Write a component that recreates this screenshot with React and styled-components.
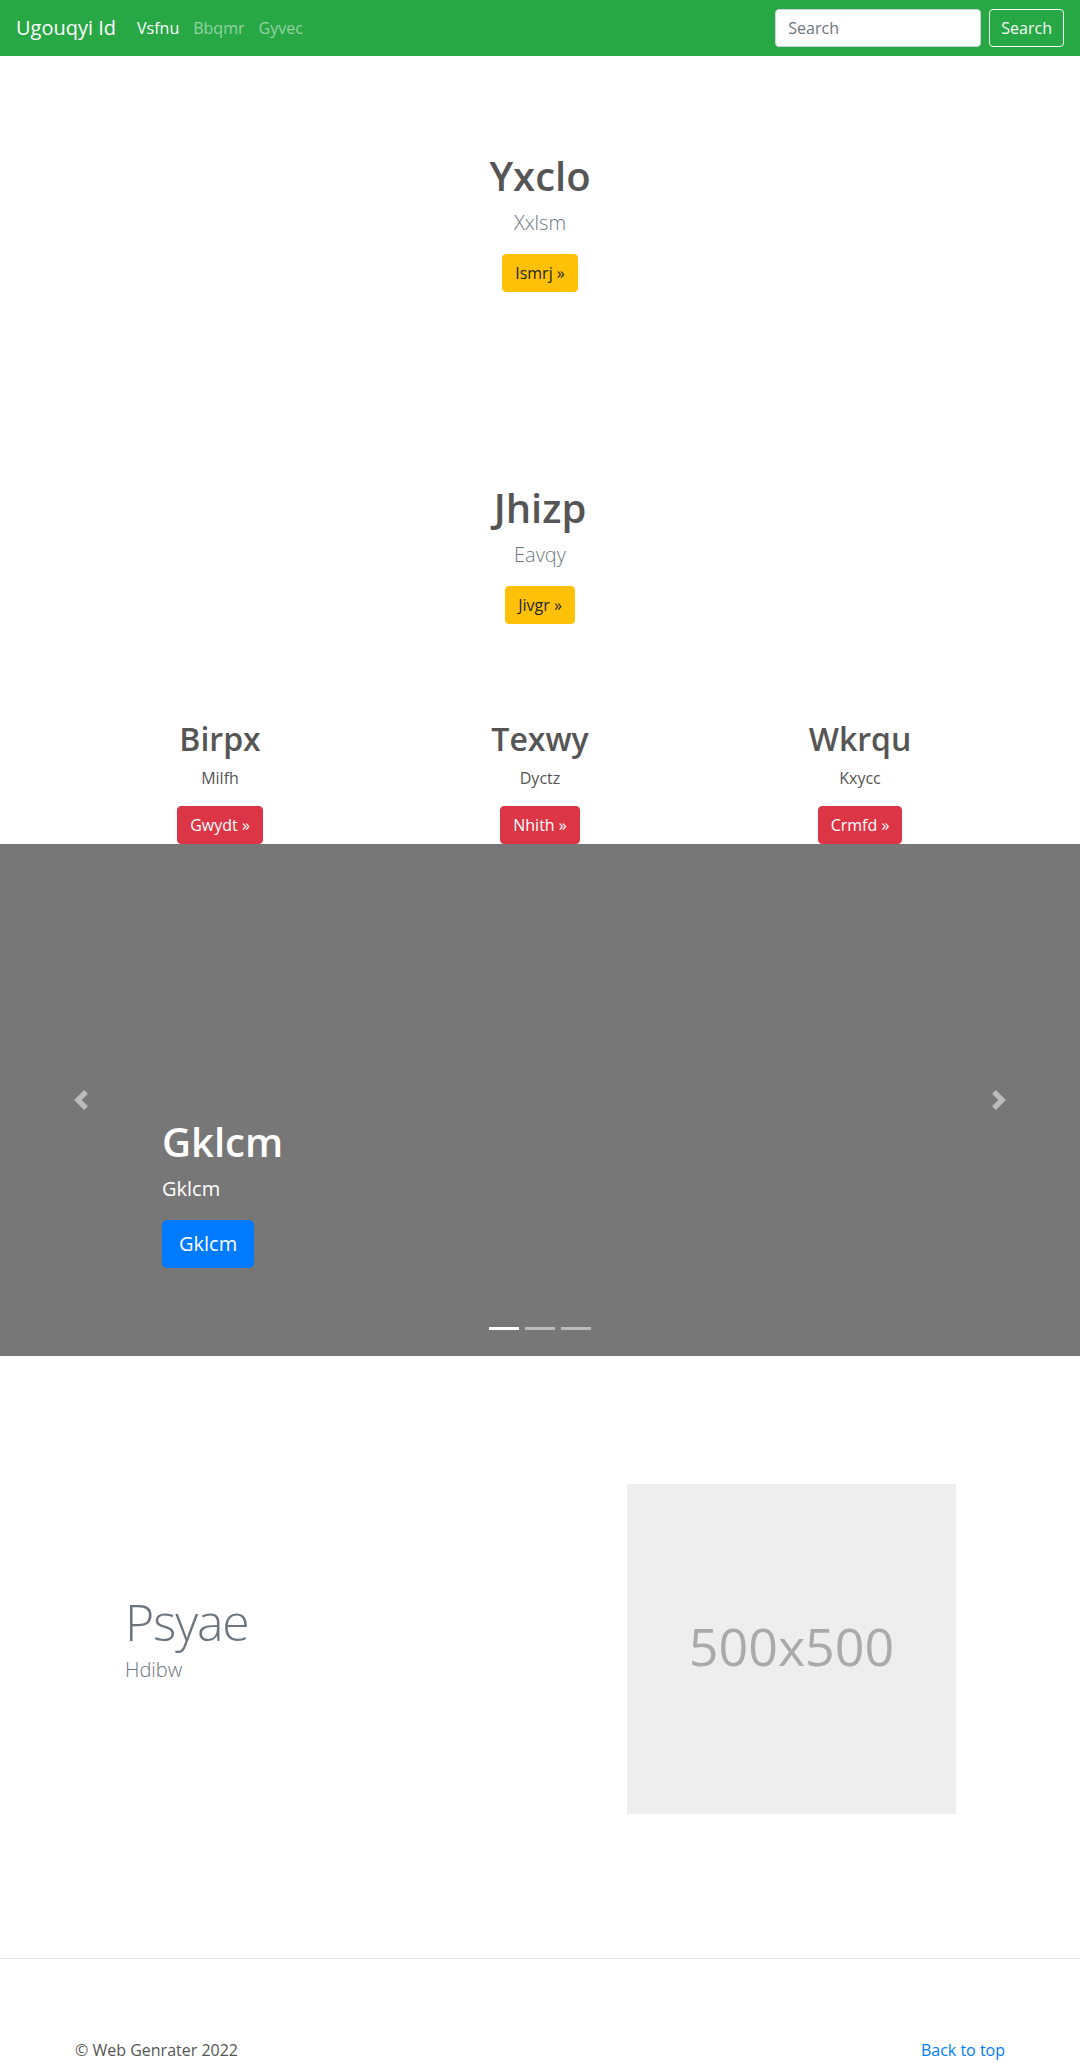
import React from "react";
import styled, { createGlobalStyle } from "styled-components";

const GlobalStyle = createGlobalStyle`
  * { box-sizing: border-box; }
  body {
    margin: 0;
    font-family: "Segoe UI", "Open Sans", "Noto Sans", sans-serif;
    font-size: 16px;
    line-height: 1.5;
    color: #555;
    background: #fff;
  }
`;

const Navbar = styled.header`
  display: flex;
  align-items: center;
  height: 56px;
  padding: 8px 16px;
  background: #28a745;
`;

const Brand = styled.a`
  font-size: 20px;
  line-height: 30px;
  padding: 5px 0;
  margin-right: 14px;
  color: #fff;
  text-decoration: none;
`;

const NavList = styled.nav`
  display: flex;
  align-items: center;
`;

const NavLink = styled.a`
  padding: 8px 7px;
  color: ${(p) => (p.$active ? "#fff" : "rgba(255,255,255,0.5)")};
  text-decoration: none;
  font-size: 16px;
`;

const SearchForm = styled.form`
  display: flex;
  align-items: center;
  margin-left: auto;
  gap: 8px;
`;

const SearchInput = styled.input`
  width: 206px;
  height: 38px;
  padding: 6px 12px;
  font: inherit;
  font-size: 16px;
  color: #495057;
  border: 1px solid #ced4da;
  border-radius: 4px;
  background: #fff;
  &::placeholder { color: #6c757d; }
`;

const OutlineButton = styled.button`
  height: 38px;
  padding: 6px 11px;
  font: inherit;
  font-size: 16px;
  color: #f8f9fa;
  background: transparent;
  border: 1px solid #f8f9fa;
  border-radius: 4px;
`;

const Hero = styled.section`
  padding: 96px 0;
  text-align: center;
`;

const HeroTitle = styled.h1`
  margin: 0 0 8px;
  font-size: 40px;
  font-weight: 600;
  line-height: 1.2;
  color: #555;
`;

const Lead = styled.p`
  margin: 0 0 16px;
  font-size: 20px;
  font-weight: 300;
  line-height: 1.5;
  color: #6c757d;
`;

const Btn = styled.a`
  display: inline-block;
  padding: ${(p) => (p.$lg ? "8px 16px" : "6px 12px")};
  font-size: ${(p) => (p.$lg ? "20px" : "16px")};
  line-height: 1.5;
  border: 1px solid ${(p) => p.$bg};
  border-radius: ${(p) => (p.$lg ? "4.8px" : "4px")};
  background: ${(p) => p.$bg};
  color: ${(p) => p.$fg};
  text-decoration: none;
  vertical-align: middle;
`;

const Container = styled.div`
  width: 960px;
  margin: 0 auto;
  padding: 0 15px;
`;

const Columns = styled.div`
  display: grid;
  grid-template-columns: repeat(3, 1fr);
  margin: 0 -15px;
`;

const Column = styled.div`
  padding: 0 15px;
  text-align: center;
`;

const ColTitle = styled.h2`
  margin: 0 0 8px;
  font-size: 32px;
  font-weight: 600;
  line-height: 1.2;
  color: #555;
`;

const ColText = styled.p`
  margin: 0 0 16px;
  font-size: 16px;
  color: #555;
`;

const Carousel = styled.section`
  position: relative;
  height: 512px;
  background: #777;
  overflow: hidden;
`;

const Caption = styled.div`
  position: absolute;
  left: 15%;
  right: 15%;
  bottom: 52px;
  padding: 20px 0;
  color: #fff;
  z-index: 10;
`;

const CaptionTitle = styled.h1`
  margin: 0 0 8px;
  font-size: 40px;
  font-weight: 600;
  line-height: 1.2;
  color: #fff;
`;

const CaptionText = styled.p`
  margin: 0 0 16px;
  font-size: 20px;
  line-height: 1.5;
`;

const CaptionAction = styled.div`
  display: flex;
  margin: 0 0 16px;
`;

const Control = styled.a`
  position: absolute;
  top: 0;
  bottom: 0;
  ${(p) => (p.$side === "prev" ? "left: 0;" : "right: 0;")}
  width: 15%;
  display: flex;
  align-items: center;
  justify-content: center;
  opacity: 0.5;
`;

const Indicators = styled.ol`
  position: absolute;
  left: 15%;
  right: 15%;
  bottom: 0;
  margin: 0 0 16px;
  padding: 0;
  list-style: none;
  display: flex;
  justify-content: center;
  z-index: 15;
`;

const Indicator = styled.li`
  width: 30px;
  height: 3px;
  margin: 0 3px 10px;
  background: #fff;
  opacity: ${(p) => (p.$active ? 1 : 0.5)};
`;

const Featurette = styled.section`
  padding: 128px 0 144px;
`;

const FeatRow = styled.div`
  display: flex;
  align-items: center;
  justify-content: space-between;
  padding: 0 49px 0 50px;
`;

const FeatText = styled.div``;

const FeatHeading = styled.h2`
  margin: 0 0 8px;
  font-size: 50px;
  font-weight: 300;
  line-height: 1;
  letter-spacing: -1.2px;
  color: #6c757d;
`;

const Placeholder = styled.div`
  width: 329px;
  height: 330px;
  background: #eee;
  color: #aaa;
  display: flex;
  align-items: center;
  justify-content: center;
  font-size: 52px;
  padding-bottom: 6px;
`;

const Divider = styled.hr`
  margin: 0;
  border: 0;
  border-top: 1px solid #e5e5e5;
`;

const Footer = styled.footer`
  padding-top: 79px;
`;

const FooterRow = styled.div`
  display: flex;
  justify-content: space-between;
`;

const FooterText = styled.p`
  margin: 0 0 16px;
  color: #555;
`;

const FooterLink = styled.a`
  color: #007bff;
  text-decoration: none;
`;

const Chevron = ({ dir }) => (
  <svg width="20" height="20" viewBox="0 0 8 8" fill="#fff">
    {dir === "prev" ? (
      <path d="M5.25 0l-4 4 4 4 1.5-1.5L4.25 4l2.5-2.5L5.25 0z" />
    ) : (
      <path d="M2.75 0l-1.5 1.5L3.75 4l-2.5 2.5L2.75 8l4-4-4-4z" />
    )}
  </svg>
);

const heroes = [
  { title: "Yxclo", lead: "Xxlsm", btn: "Ismrj »" },
  { title: "Jhizp", lead: "Eavqy", btn: "Jivgr »" },
];

const cols = [
  { title: "Birpx", text: "Milfh", btn: "Gwydt »" },
  { title: "Texwy", text: "Dyctz", btn: "Nhith »" },
  { title: "Wkrqu", text: "Kxycc", btn: "Crmfd »" },
];

export default function App() {
  return (
    <>
      <GlobalStyle />
      <Navbar>
        <Brand href="#">Ugouqyi Id</Brand>
        <NavList>
          <NavLink $active href="#">Vsfnu</NavLink>
          <NavLink href="#">Bbqmr</NavLink>
          <NavLink href="#">Gyvec</NavLink>
        </NavList>
        <SearchForm onSubmit={(e) => e.preventDefault()}>
          <SearchInput placeholder="Search" />
          <OutlineButton type="submit">Search</OutlineButton>
        </SearchForm>
      </Navbar>

      {heroes.map((h) => (
        <Hero key={h.title}>
          <HeroTitle>{h.title}</HeroTitle>
          <Lead>{h.lead}</Lead>
          <Btn href="#" $bg="#ffc107" $fg="#212529">{h.btn}</Btn>
        </Hero>
      ))}

      <Container>
        <Columns>
          {cols.map((c) => (
            <Column key={c.title}>
              <ColTitle>{c.title}</ColTitle>
              <ColText>{c.text}</ColText>
              <Btn href="#" $bg="#dc3545" $fg="#fff">{c.btn}</Btn>
            </Column>
          ))}
        </Columns>
      </Container>

      <Carousel>
        <Indicators>
          <Indicator $active />
          <Indicator />
          <Indicator />
        </Indicators>
        <Caption>
          <CaptionTitle>Gklcm</CaptionTitle>
          <CaptionText>Gklcm</CaptionText>
          <CaptionAction>
            <Btn href="#" $lg $bg="#007bff" $fg="#fff">Gklcm</Btn>
          </CaptionAction>
        </Caption>
        <Control $side="prev" href="#"><Chevron dir="prev" /></Control>
        <Control $side="next" href="#"><Chevron dir="next" /></Control>
      </Carousel>

      <Featurette>
        <Container>
          <FeatRow>
            <FeatText>
              <FeatHeading>Psyae</FeatHeading>
              <Lead>Hdibw</Lead>
            </FeatText>
            <Placeholder>500x500</Placeholder>
          </FeatRow>
        </Container>
      </Featurette>

      <Divider />

      <Footer>
        <Container>
          <FooterRow>
            <FooterText>© Web Genrater 2022</FooterText>
            <FooterText><FooterLink href="#">Back to top</FooterLink></FooterText>
          </FooterRow>
        </Container>
      </Footer>
    </>
  );
}
